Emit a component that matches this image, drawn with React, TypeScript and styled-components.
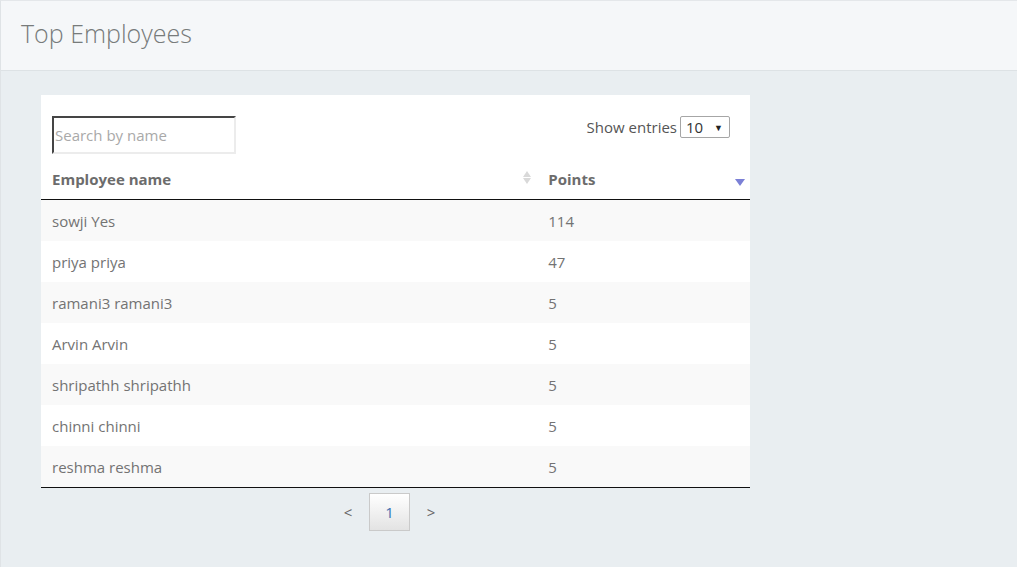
import React from "react";
import styled, { createGlobalStyle } from "styled-components";

const Global = createGlobalStyle`
  html, body { margin: 0; padding: 0; background: #e9eef1; }
  body { font-family: "Open Sans", "Liberation Sans", sans-serif; }
  * { box-sizing: border-box; }
`;

const Page = styled.div`
  min-height: 567px;
  background: #e9eef1;
  border-top: 1px solid #e4e7ea;
  border-left: 1px solid #dfe3e6;
`;

const Header = styled.header`
  height: 70px;
  background: #f5f7f9;
  border-bottom: 1px solid #dde2e5;
  display: flex;
  align-items: center;
  padding: 0 0 5px 20px;
`;

const Title = styled.h1`
  margin: 0;
  font-size: 25px;
  font-weight: 300;
  color: #777b7b;
`;

const Content = styled.main`
  padding: 24px 0 0 40px;
`;

const Panel = styled.div`
  width: 709px;
`;

const Card = styled.div`
  background: #ffffff;
  padding-top: 21px;
`;

const Toolbar = styled.div`
  display: flex;
  justify-content: space-between;
  align-items: flex-start;
  padding: 0 20px 0 11px;
  height: 43px;
`;

const SearchInput = styled.input`
  width: 184px;
  height: 38px;
  border: 2px inset #ececec;
  border-top-color: #999;
  border-left-color: #999;
  font-family: "Open Sans", "Liberation Sans", sans-serif;
  font-size: 15px;
  color: #555;
  padding: 0 1px;
  outline: none;
  &::placeholder { color: #a9a9a9; }
`;

const Entries = styled.label`
  display: flex;
  align-items: center;
  gap: 3px;
  font-size: 15px;
  color: #555;
`;

const SelectBox = styled.div`
  width: 50px;
  height: 22px;
  border: 1px solid #a6a6a6;
  border-radius: 2px;
  display: flex;
  align-items: center;
  justify-content: space-between;
  padding: 0 6px 0 5px;
  font-size: 15px;
  color: #333;
  background: #fff;
`;

const Caret = styled.span`
  font-size: 9px;
  color: #222;
`;

const Table = styled.table`
  width: 100%;
  border-collapse: separate;
  border-spacing: 0;
  table-layout: fixed;
  border-bottom: 1px solid #111;
`;

const Th = styled.th<{ $w: string }>`
  width: ${(p) => p.$w};
  text-align: left;
  font-size: 15px;
  font-weight: 700;
  color: #6c6c6c;
  height: 41px;
  padding: 0 11px;
  border-bottom: 1px solid #111;
  position: relative;
  vertical-align: middle;
`;

const SortBoth = styled.span`
  position: absolute;
  right: 6px;
  top: 12px;
  display: flex;
  flex-direction: column;
  gap: 1px;
`;

const SortDesc = styled.span`
  position: absolute;
  right: 5px;
  top: 20px;
  width: 0;
  height: 0;
  border-left: 5px solid transparent;
  border-right: 5px solid transparent;
  border-top: 7px solid #7b80d6;
`;

const Tri = styled.span<{ $up?: boolean }>`
  width: 0;
  height: 0;
  border-left: 4px solid transparent;
  border-right: 4px solid transparent;
  ${(p) => (p.$up ? "border-bottom: 6px solid #d9d9d9;" : "border-top: 6px solid #d9d9d9;")}
`;

const Tr = styled.tr<{ $odd: boolean }>`
  background: ${(p) => (p.$odd ? "#f9f9f9" : "#ffffff")};
`;

const Td = styled.td`
  height: 41px;
  padding: 0 11px;
  font-size: 15px;
  color: #737373;
  vertical-align: middle;
`;

const Pager = styled.div`
  display: flex;
  justify-content: center;
  align-items: center;
  padding-top: 5px;
  padding-right: 12px;
`;

const Arrow = styled.span`
  font-size: 15px;
  color: #666;
  width: 42px;
  text-align: center;
`;

const PageBtn = styled.span`
  width: 41px;
  height: 38px;
  border: 1px solid #cacaca;
  background: linear-gradient(#ffffff, #e3e3e3);
  display: flex;
  align-items: center;
  justify-content: center;
  font-size: 15px;
  color: #3a6fb0;
`;

const rows: [string, number][] = [
  ["sowji Yes", 114],
  ["priya priya", 47],
  ["ramani3 ramani3", 5],
  ["Arvin Arvin", 5],
  ["shripathh shripathh", 5],
  ["chinni chinni", 5],
  ["reshma reshma", 5],
];

export default function App() {
  return (
    <>
      <Global />
      <Page>
        <Header>
          <Title>Top Employees</Title>
        </Header>
        <Content>
          <Panel>
            <Card>
              <Toolbar>
                <SearchInput placeholder="Search by name" />
                <Entries>
                  Show entries
                  <SelectBox>
                    10 <Caret>▼</Caret>
                  </SelectBox>
                </Entries>
              </Toolbar>
              <Table>
                <thead>
                  <tr>
                    <Th $w="70%">
                      Employee name
                      <SortBoth>
                        <Tri $up />
                        <Tri />
                      </SortBoth>
                    </Th>
                    <Th $w="30%">
                      Points
                      <SortDesc />
                    </Th>
                  </tr>
                </thead>
                <tbody>
                  {rows.map(([n, p], i) => (
                    <Tr key={n} $odd={i % 2 === 0}>
                      <Td>{n}</Td>
                      <Td>{p}</Td>
                    </Tr>
                  ))}
                </tbody>
              </Table>
            </Card>
            <Pager>
              <Arrow>&lt;</Arrow>
              <PageBtn>1</PageBtn>
              <Arrow>&gt;</Arrow>
            </Pager>
          </Panel>
        </Content>
      </Page>
    </>
  );
}
